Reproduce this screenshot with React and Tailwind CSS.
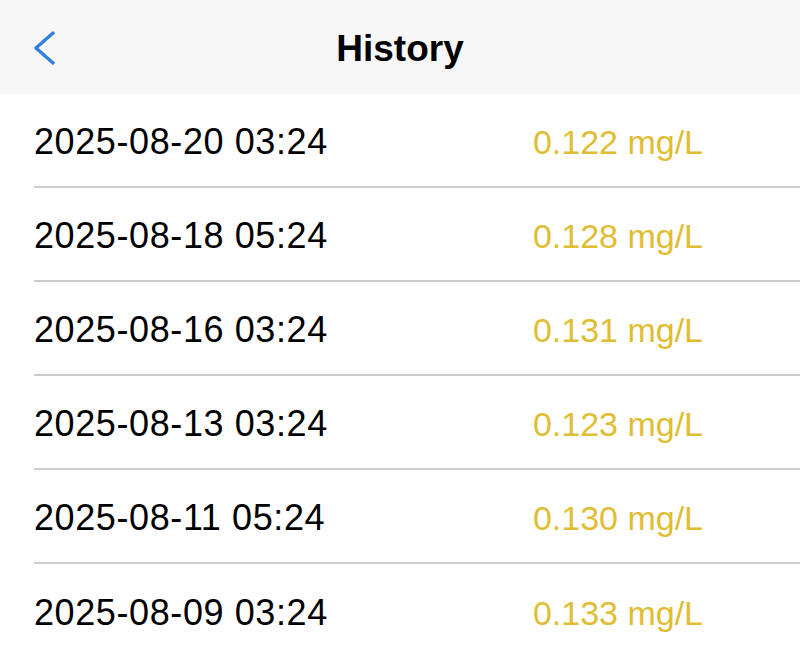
import React from "react";

const records = [
  { time: "2025-08-20 03:24", value: "0.122 mg/L" },
  { time: "2025-08-18 05:24", value: "0.128 mg/L" },
  { time: "2025-08-16 03:24", value: "0.131 mg/L" },
  { time: "2025-08-13 03:24", value: "0.123 mg/L" },
  { time: "2025-08-11 05:24", value: "0.130 mg/L" },
  { time: "2025-08-09 03:24", value: "0.133 mg/L" },
];

const App = () => {
  return (
    <div className="w-[800px] h-[653px] overflow-hidden bg-white font-['Liberation_Sans',Arial,sans-serif]">
      {/* Header */}
      <header className="relative h-[94px] bg-[#f7f7f7] flex items-center justify-center">
        <button className="absolute left-[33px] top-[31px]">
          <svg width="22" height="34" viewBox="0 0 22 34" fill="none">
            <polyline
              points="20,2 3,17 20,32"
              stroke="#2f80da"
              strokeWidth="3.4"
              strokeLinecap="round"
              strokeLinejoin="round"
            />
          </svg>
        </button>
        <h1 className="text-[37px] leading-none font-bold text-black pt-[2px]">History</h1>
      </header>

      {/* List */}
      <ul>
        {records.map((r, i) => (
          <li
            key={r.time}
            className={`ml-[34px] h-[94px] flex items-center justify-between pr-[97px] pt-[4px] ${
              i < records.length - 1 ? "border-b-2 border-[#cbcbcb]" : ""
            }`}
          >
            <span className="text-[36px] leading-none tracking-[0.6px] text-black">{r.time}</span>
            <span className="text-[34px] leading-none text-[#e0bd33]">{r.value}</span>
          </li>
        ))}
      </ul>
    </div>
  );
};

export default App;
